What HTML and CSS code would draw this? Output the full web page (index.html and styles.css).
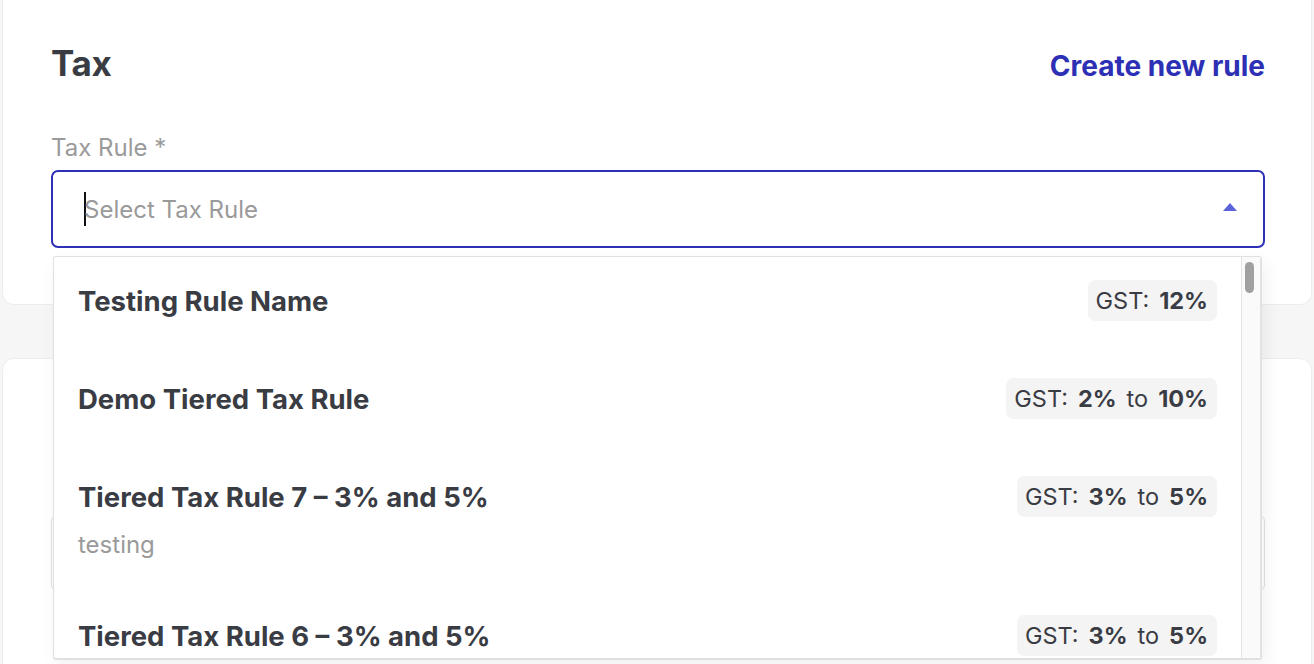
FILE: index.html
```html
<!DOCTYPE html>
<html lang="en">
<head>
<meta charset="utf-8">
<title>Tax</title>
<link rel="stylesheet" href="styles.css">
</head>
<body>
<div class="page">
  <section class="card card-tax">
    <div class="card-head">
      <h2 class="card-title">Tax</h2>
      <a class="link-create" href="#">Create new rule</a>
    </div>
    <label class="field-label">Tax Rule *</label>
    <div class="select">
      <div class="select-box">
        <span class="caret"></span>
        <span class="placeholder">Select Tax Rule</span>
        <span class="arrow"></span>
      </div>
      <div class="menu">
        <ul class="menu-list">
          <li class="option">
            <div class="option-row">
              <span class="option-name">Testing Rule Name</span>
              <span class="badge">GST:<b>12%</b></span>
            </div>
          </li>
          <li class="option">
            <div class="option-row">
              <span class="option-name">Demo Tiered Tax Rule</span>
              <span class="badge">GST:<b>2%</b>to<b>10%</b></span>
            </div>
          </li>
          <li class="option">
            <div class="option-row">
              <span class="option-name">Tiered Tax Rule 7 – 3% and 5%</span>
              <span class="badge">GST:<b>3%</b>to<b>5%</b></span>
            </div>
            <div class="option-desc">testing</div>
          </li>
          <li class="option">
            <div class="option-row">
              <span class="option-name">Tiered Tax Rule 6 – 3% and 5%</span>
              <span class="badge">GST:<b>3%</b>to<b>5%</b></span>
            </div>
          </li>
        </ul>
        <div class="scroll-track"><div class="scroll-thumb"></div></div>
      </div>
    </div>
  </section>
  <section class="card card-next">
    <div class="ghost-label"></div>
    <div class="ghost-label second"></div>
    <div class="ghost-input"></div>
    <div class="ghost-error"></div>
  </section>
</div>
</body>
</html>
```
FILE: styles.css
```css
* { box-sizing: border-box; }
html, body { margin: 0; padding: 0; }
body {
  background: #f6f6f6;
  font-family: Inter, "Noto Sans", sans-serif;
  color: #3a3c44;
  height: 664px;
  overflow: hidden;
}
.page {
  padding: 0 2px;
  display: flex;
  flex-direction: column;
  gap: 53px;
}
.card {
  background: #fff;
  border: 1px solid #ededed;
  border-radius: 12px;
  padding: 0 46px 0 48px;
}
.card-tax {
  border-top: none;
  border-radius: 0 0 12px 12px;
  padding-top: 41px;
  padding-bottom: 56px;
}
.card-head {
  display: flex;
  justify-content: space-between;
  align-items: center;
  height: 44px;
}
.card-title {
  margin: 0;
  font-size: 35px;
  font-weight: 700;
  letter-spacing: -0.3px;
}
.link-create {
  font-size: 28px;
  font-weight: 700;
  color: #2d2fb4;
  text-decoration: none;
  margin-top: 6px;
}
.field-label {
  display: block;
  margin-top: 47px;
  font-size: 24px;
  line-height: 32px;
  color: #9a9a9a;
}
.select {
  position: relative;
  margin-top: 6px;
}
.select-box {
  height: 78px;
  border: 2px solid #2f30b8;
  border-radius: 7px;
  display: flex;
  align-items: center;
  padding: 0 26px 0 31px;
}
.caret {
  width: 2px;
  height: 34px;
  background: #111;
  margin-right: -2px;
}
.placeholder {
  font-size: 24px;
  color: #9a9a9a;
  flex: 1;
}
.arrow {
  width: 0;
  height: 0;
  border-left: 7.5px solid transparent;
  border-right: 7.5px solid transparent;
  border-bottom: 8px solid #5b63d8;
  margin-top: -4px;
}
.menu {
  position: absolute;
  top: 86px;
  left: 2px;
  right: 3px;
  height: 404px;
  background: #fff;
  border: 1px solid #e0e0e0;
  border-bottom-width: 2px;
  border-radius: 3px;
  box-shadow: 4px 6px 18px rgba(0,0,0,0.06);
  display: flex;
  overflow: hidden;
  z-index: 5;
}
.menu-list {
  list-style: none;
  margin: 0;
  padding: 0;
  flex: 1;
}
.option {
  padding: 23px 24px 33px 24px;
}
.option + .option { padding-top: 24px; }
.option-row {
  display: flex;
  justify-content: space-between;
  align-items: center;
  height: 41px;
}
.option-name {
  font-size: 27.5px;
  font-weight: 700;
}
.badge {
  background: #f4f4f4;
  border-radius: 7px;
  height: 41px;
  display: flex;
  align-items: center;
  gap: 10px;
  padding: 0 9px 0 8px;
  font-size: 23.5px;
}
.badge b { font-weight: 700; }
.option-desc {
  margin-top: 14px;
  font-size: 24px;
  line-height: 27px;
  color: #9a9a9a;
}
.scroll-track {
  width: 20px;
  background: #fafafa;
  border-left: 1px solid #e4e4e4;
  border-right: 1px solid #e4e4e4;
  padding: 5px 0 0 3px;
}
.scroll-thumb {
  width: 9px;
  height: 31px;
  background: #a0a0a0;
  border-radius: 5px;
}
.card-next {
  height: 320px;
  padding-top: 10px;
}
.ghost-label {
  width: 60px;
  height: 6px;
  background: #e2e2e2;
  border-radius: 2px;
  margin-left: 2px;
}
.ghost-label.second { margin-top: 114px; }
.ghost-input {
  margin-top: 20px;
  height: 76px;
  border: 1px solid #e0e0e0;
  border-radius: 6px;
}
.ghost-error {
  margin-top: 16px;
  width: 60px;
  height: 12px;
  background: #f0b4b4;
  border-radius: 2px;
  margin-left: 2px;
}
```
